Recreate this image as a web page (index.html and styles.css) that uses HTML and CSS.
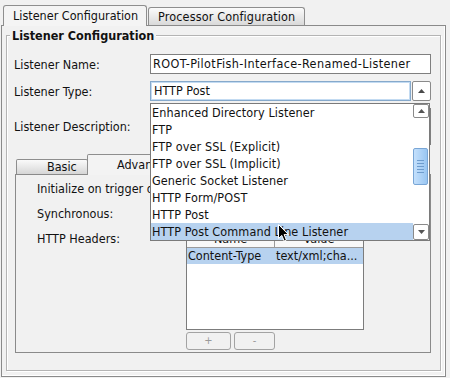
FILE: index.html
```html
<!DOCTYPE html>
<html lang="en">
<head>
    <meta charset="UTF-8">
    <title>Listener Configuration</title>
    <link rel="stylesheet" href="styles.css">
</head>
<body>
    <div class="window">
        <div class="tabs">
            <div class="tab active">Listener Configuration</div>
            <div class="tab">Processor Configuration</div>
        </div>
        <div class="panel">
            <div class="group">
                <div class="group-title">Listener Configuration</div>
                <div class="form">
                    <label>Listener Name:</label>
                    <div class="field name">ROOT-PilotFish-Interface-Renamed-Listener</div>
                    <label>Listener Type:</label>
                    <div class="combo">
                        <div class="combo-text">HTTP Post</div>
                        <div class="combo-btn">
                            <svg width="7" height="4" viewBox="0 0 7 4"><polygon points="0,4 3.5,0 7,4" fill="#4a4a4a"/></svg>
                        </div>
                    </div>
                    <label>Listener Description:</label>
                    <div class="area"></div>
                </div>

                <div class="subtabs">
                    <div class="subtab">Basic</div>
                    <div class="subtab active">Advanced</div>
                </div>
                <div class="subpanel">
                    <div class="opt-label">Initialize on trigger deploy:</div>
                    <div class="check"></div>
                    <div class="opt-label">Synchronous:</div>
                    <div class="check"></div>
                    <div class="opt-label">HTTP Headers:</div>
                    <div>
                        <div class="table">
                            <div class="thead">
                                <div class="th">Name</div>
                                <div class="th">Value</div>
                            </div>
                            <div class="tr selected">
                                <div class="td">Content-Type</div>
                                <div class="td">text/xml;cha...</div>
                            </div>
                        </div>
                        <div class="btns">
                            <div class="btn plus">+</div>
                            <div class="btn minus">-</div>
                        </div>
                    </div>
                </div>
            </div>
        </div>

        <!-- combo box popup, open over the form -->
        <div class="popup">
            <div class="list">
                <div class="item">Enhanced Directory Listener</div>
                <div class="item">FTP</div>
                <div class="item">FTP over SSL (Explicit)</div>
                <div class="item">FTP over SSL (Implicit)</div>
                <div class="item">Generic Socket Listener</div>
                <div class="item">HTTP Form/POST</div>
                <div class="item">HTTP Post</div>
                <div class="item selected">HTTP Post Command Line Listener</div>
            </div>
            <div class="scrollbar">
                <div class="sb-btn">
                    <svg width="7" height="4" viewBox="0 0 7 4"><polygon points="0,4 3.5,0 7,4" fill="#555"/></svg>
                </div>
                <div class="sb-track">
                    <div class="sb-thumb">
                        <span></span><span></span><span></span><span></span><span></span>
                    </div>
                </div>
                <div class="sb-btn down">
                    <svg width="7" height="4" viewBox="0 0 7 4"><polygon points="0,0 7,0 3.5,4" fill="#555"/></svg>
                </div>
            </div>
        </div>

        <svg class="cursor" width="12" height="18" viewBox="0 0 12 18">
            <path d="M0.5 0.5 L0.5 14.5 L3.8 11.4 L6.2 17 L8.4 16 L6.1 10.6 L10.5 10.6 Z" fill="#000" stroke="#fff" stroke-width="1"/>
        </svg>
    </div>
</body>
</html>
```

FILE: styles.css
```css
/* Base */
body {
    margin: 0;
    background-color: #f1f1f1;
    font-family: "DejaVu Sans Condensed", "DejaVu Sans", sans-serif;
    font-size: 12.5px;
    color: #111;
}

.window {
    position: relative;
    width: 450px;
    height: 378px;
    overflow: hidden;
}

/* Top tabs */
.tabs {
    display: flex;
    align-items: flex-end;
    height: 25px;
    padding-left: 3px;
    gap: 1px;
}

.tab {
    box-sizing: border-box;
    height: 18px;
    line-height: 17px;
    padding: 0 9px 0 9px;
    border: 1px solid #8e8e8e;
    border-bottom: none;
    border-radius: 3px 3px 0 0;
    background: linear-gradient(#fbfbfb, #d9d9d9);
    white-space: nowrap;
    letter-spacing: 0.15px;
}

.tab.active {
    position: relative;
    z-index: 1;
    width: 144px;
    height: 21px;
    line-height: 20px;
    padding-left: 9px;
    margin-bottom: -1px;
    background: #f4f4f4;
    letter-spacing: 0;
}

/* Tab panel */
.panel {
    box-sizing: border-box;
    height: 352px;
    margin: 0 4px 0 1px;
    padding: 9px 4px 0 4px;
    border: 1px solid #8a8a8a;
    box-shadow: inset -1px -1px 0 #fff;
}

/* Titled group */
.group {
    box-sizing: border-box;
    height: 336px;
    padding: 0 9px 0 7px;
    border: 1px solid #b4b4b4;
    box-shadow: 1px 1px 0 #fff, inset 1px 1px 0 #fff;
}

.group-title {
    display: table;
    margin: -8px 0 0 -4px;
    padding: 0 2px;
    line-height: 15px;
    font-weight: bold;
    background-color: #f1f1f1;
}

.form {
    display: grid;
    grid-template-columns: 136px 1fr;
    row-gap: 7px;
    align-items: center;
    margin-top: 11px;
}

.field,
.combo-text {
    box-sizing: border-box;
    height: 20px;
    line-height: 18px;
    padding: 0 2px;
    border: 1px solid #7f7f7f;
    background-color: #fff;
    white-space: nowrap;
    overflow: hidden;
}

.field.name {
    letter-spacing: 0.38px;
}

.combo {
    display: flex;
    height: 20px;
}

.combo-text {
    flex: 1;
    border-color: #86a9cb;
    box-shadow: inset 0 0 0 1px #c3dbf2;
    padding-left: 3px;
}

.combo-btn {
    box-sizing: border-box;
    width: 19px;
    margin-left: 1px;
    border: 1px solid #8a8a8a;
    border-radius: 2px;
    background-color: #fff;
    display: flex;
    align-items: center;
    justify-content: center;
}

.area {
    box-sizing: border-box;
    height: 37px;
    border: 1px solid #7f7f7f;
    background-color: #fff;
}

/* Inner tabs */
.subtabs {
    display: flex;
    align-items: flex-end;
    height: 20px;
    margin: 9px 0 0 2px;
}

.subtab {
    box-sizing: border-box;
    width: 72px;
    height: 15px;
    line-height: 14px;
    padding-left: 30px;
    border: 1px solid #8e8e8e;
    border-bottom: none;
    border-radius: 2px 2px 0 0;
    background: linear-gradient(#fafafa, #d6d6d6);
}

.subtab.active {
    position: relative;
    z-index: 1;
    width: 110px;
    height: 21px;
    line-height: 19px;
    margin: 0 0 -1px -1px;
    padding-left: 29px;
    background: #f3f3f3;
}

.subpanel {
    box-sizing: border-box;
    height: 179px;
    margin-left: 1px;
    padding: 5px 0 0 21px;
    border: 1px solid #8a8a8a;
    display: grid;
    grid-template-columns: 149px 1fr;
    grid-template-rows: 17px 17px auto;
    row-gap: 8px;
    align-content: start;
}

.opt-label {
    line-height: 17px;
    white-space: nowrap;
}

.check {
    width: 13px;
    height: 13px;
    margin-top: 2px;
    border: 1px solid #888;
    background-color: #fff;
}

/* Headers table */
.table {
    box-sizing: border-box;
    width: 178px;
    height: 100px;
    border: 1px solid #7c7c7c;
    background-color: #fff;
}

.thead,
.tr {
    display: grid;
    grid-template-columns: 88px 1fr;
}

.th {
    box-sizing: border-box;
    height: 17px;
    line-height: 16px;
    text-align: center;
    border-right: 1px solid #9a9a9a;
    border-bottom: 1px solid #9a9a9a;
    background-color: #f8f8f8;
}

.th:last-child {
    border-right: none;
}

.td {
    height: 16px;
    line-height: 16px;
    padding-left: 1px;
    white-space: nowrap;
    overflow: hidden;
}

.tr.selected {
    background-color: #b7d2ef;
}

.btns {
    display: flex;
    gap: 3px;
    margin-top: 2px;
}

.btn {
    box-sizing: border-box;
    height: 18px;
    line-height: 16px;
    border: 1px solid #a3a3a3;
    border-radius: 3px;
    text-align: center;
    color: #9a9a9a;
    font-size: 11px;
}

.btn.plus {
    width: 45px;
}

.btn.minus {
    width: 41px;
}

/* Combo popup list */
.popup {
    position: absolute;
    z-index: 5;
    left: 150px;
    top: 103px;
    box-sizing: border-box;
    width: 280px;
    height: 138px;
    border: 1px solid #7a7a7a;
    background-color: #fff;
    display: flex;
}

.list {
    flex: 1;
}

.item {
    height: 17px;
    line-height: 17px;
    padding-left: 1px;
    white-space: nowrap;
    letter-spacing: 0.1px;
}

.item.selected {
    background-color: #b7d2ef;
}

.scrollbar {
    width: 16px;
    display: flex;
    flex-direction: column;
}

.sb-btn {
    box-sizing: border-box;
    height: 14px;
    border: 1px solid #8a8a8a;
    border-radius: 2px;
    background-color: #fff;
    display: flex;
    align-items: center;
    justify-content: center;
}

.sb-btn.down {
    height: 16px;
}

.sb-track {
    flex: 1;
    padding-top: 30px;
}

.sb-thumb {
    box-sizing: border-box;
    height: 37px;
    margin-right: 1px;
    border: 1px solid #79a6d6;
    border-radius: 2px;
    background: linear-gradient(90deg, #c4e0fc, #99c6f2);
    display: flex;
    flex-direction: column;
    align-items: center;
    justify-content: center;
    gap: 2px;
}

.sb-thumb span {
    width: 7px;
    height: 1px;
    background-color: #6e9ccd;
}

.cursor {
    position: absolute;
    z-index: 6;
    left: 278px;
    top: 224px;
}
```
